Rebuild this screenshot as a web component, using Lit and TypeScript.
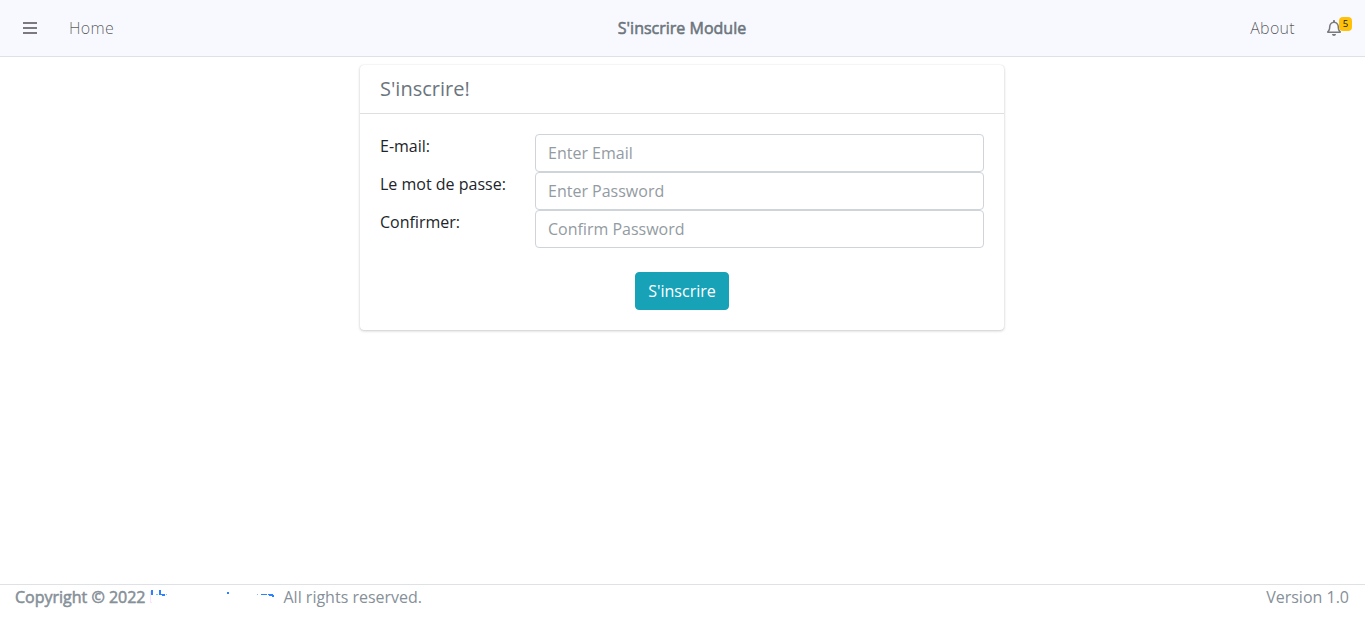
import { LitElement, html, css, svg } from "lit";
import { customElement, state } from "lit/decorators.js";

@customElement("app-root")
export class AppRoot extends LitElement {
  static styles = css`
    :host { display: flex; flex-direction: column; height: 625px; overflow: hidden; background: #fff;
      font: 400 16px/24px "Open Sans", sans-serif; color: #212529; }
    * { box-sizing: border-box; }
    a { text-decoration: none; color: inherit; }
    header { display: grid; grid-template-columns: 1fr auto 1fr; align-items: center; height: 57px;
      padding: 8px 9px 8px 8px; background: #f8f9ff; border-bottom: 1px solid #dee2e6; color: rgba(0,0,0,.5); }
    .group { display: flex; align-items: center; font-weight: 300; }
    .right { justify-content: flex-end; margin-right: -1px; }
    .link { display: block; padding: 8px 16px; height: 40px; letter-spacing: .3px; color: rgba(0,0,0,.66); }
    .menu { display: flex; align-items: center; width: 45px; height: 40px; padding-left: 15px; }
    .title { color: #6c757d; -webkit-text-stroke: .55px currentColor; }
    .bell { position: relative; width: 46px; height: 40px; }
    .bell svg { display: block; margin: 12px 0 0 16px; }
    .badge { position: absolute; left: 28px; top: 9px; width: 13px; height: 14px; border-radius: 4px;
      background: #ffc107; color: #111a24; font-size: 9.6px; line-height: 14px; font-weight: 400; text-align: center; }
    main { flex: 1; padding-right: 1px; }
    .card { width: 644px; height: 265px; margin: 8px auto 0; border-radius: 4px; background: #fff;
      box-shadow: 0 0 1px rgba(0,0,0,.125), 0 1px 3px rgba(0,0,0,.2); }
    .card-head { height: 49px; padding: 12px 20px; border-bottom: 1px solid rgba(0,0,0,.125);
      font-size: 20px; color: #6c757d; }
    .card-body { padding: 20px; }
    .row { display: grid; grid-template-columns: 155px 449px; height: 38px; }
    input { height: 38px; width: 100%; padding: 6px 12px; border: 1px solid #ced4da; border-radius: 4px;
      font: inherit; color: #495057; background: #fff; outline: none; }
    input::placeholder { color: #939ba2; opacity: 1; }
    .actions { display: flex; justify-content: center; padding-top: 24px; }
    button { width: 94px; height: 38px; padding: 6px 12px; border: 1px solid #17a2b8; border-radius: 4px;
      background: #17a2b8; color: #fff; font: inherit; }
    footer { display: flex; justify-content: space-between; height: 41px; padding: 0 16px 0 15px;
      border-top: 1px solid #dee2e6; color: #869099; }
    .legal { display: flex; }
    .legal strong { width: 130px; white-space: nowrap; font-weight: 400; -webkit-text-stroke: .55px currentColor; }
    .brand { display: block; width: 130px; height: 24px; margin-left: 4px; margin-right: 4.5px; }
  `;

  @state() private fields = [
    { label: "E-mail:", hint: "Enter Email", type: "email" },
    { label: "Le mot de passe:", hint: "Enter Password", type: "password" },
    { label: "Confirmer:", hint: "Confirm Password", type: "password" },
  ];

  private brand() {
    return svg`<svg class="brand" width="130" height="24" viewBox="0 0 130 24" shape-rendering="crispEdges">
      <path fill="#fbe3fb" d="M1 6h1v12h-1zM2 17h1v1h-1z"/>
      <g fill="#2b82ff"><path d="M2 5h2v5h-2zM10 5h2v5h-2zM12 9h4v1h-4zM13 10h3v1h-3z"/>
      <path d="M78 7h2v2h-2zM112 9h6v1h-6zM119 9h5v1h-5zM120 10h5v1h-5zM123 11h2v1h-2z"/></g>
      <path fill="#8bbcff" d="M7 9h2v1h-2zM17 9h1v1h-1zM108 9h1v1h-1z"/></svg>`;
  }

  render() {
    return html`
      <header>
        <nav class="group">
          <a class="menu" href="#" aria-label="Menu"><svg width="14" height="14" viewBox="0 0 14 14"><path fill="#7c7a80" d="M0 1h14v2H0zM0 6h14v2H0zM0 11h14v2H0z"/></svg></a>
          <a class="link" href="#">Home</a>
        </nav>
        <div class="title">S'inscrire Module</div>
        <nav class="group right">
          <a class="link" href="#">About</a>
          <a class="bell" href="#" aria-label="Notifications">
            <svg width="14" height="16" viewBox="0 0 448 512"><path fill="#797a7d" d="M439.39 362.29c-19.32-20.76-55.47-51.99-55.47-154.29 0-77.7-54.48-139.9-127.94-155.16V32c0-17.67-14.32-32-31.98-32s-31.98 14.33-31.98 32v20.84C118.56 68.1 64.08 130.3 64.08 208c0 102.3-36.15 133.53-55.47 154.29-6 6.45-8.66 14.16-8.61 21.71.11 16.4 12.98 32 32.1 32h383.8c19.12 0 32-15.6 32.1-32 .05-7.55-2.61-15.27-8.61-21.71zM67.53 368c21.22-27.97 44.42-74.33 44.53-159.42 0-.2-.06-.38-.06-.58 0-61.86 50.14-112 112-112s112 50.14 112 112c0 .2-.06.38-.06.58.11 85.1 23.31 131.46 44.53 159.42H67.53zM224 512c35.32 0 63.97-28.65 63.97-64H160.03c0 35.35 28.65 64 63.97 64z"/></svg>
            <span class="badge">5</span>
          </a>
        </nav>
      </header>
      <main>
        <section class="card">
          <div class="card-head">S'inscrire!</div>
          <form class="card-body">
            ${this.fields.map(f => html`<label class="row"><span>${f.label}</span><input type=${f.type} placeholder=${f.hint} /></label>`)}
            <div class="actions"><button type="button">S'inscrire</button></div>
          </form>
        </section>
      </main>
      <footer>
        <div class="legal"><strong>Copyright © 2022</strong>${this.brand()}<span>All rights reserved.</span></div>
        <span>Version 1.0</span>
      </footer>`;
  }
}
